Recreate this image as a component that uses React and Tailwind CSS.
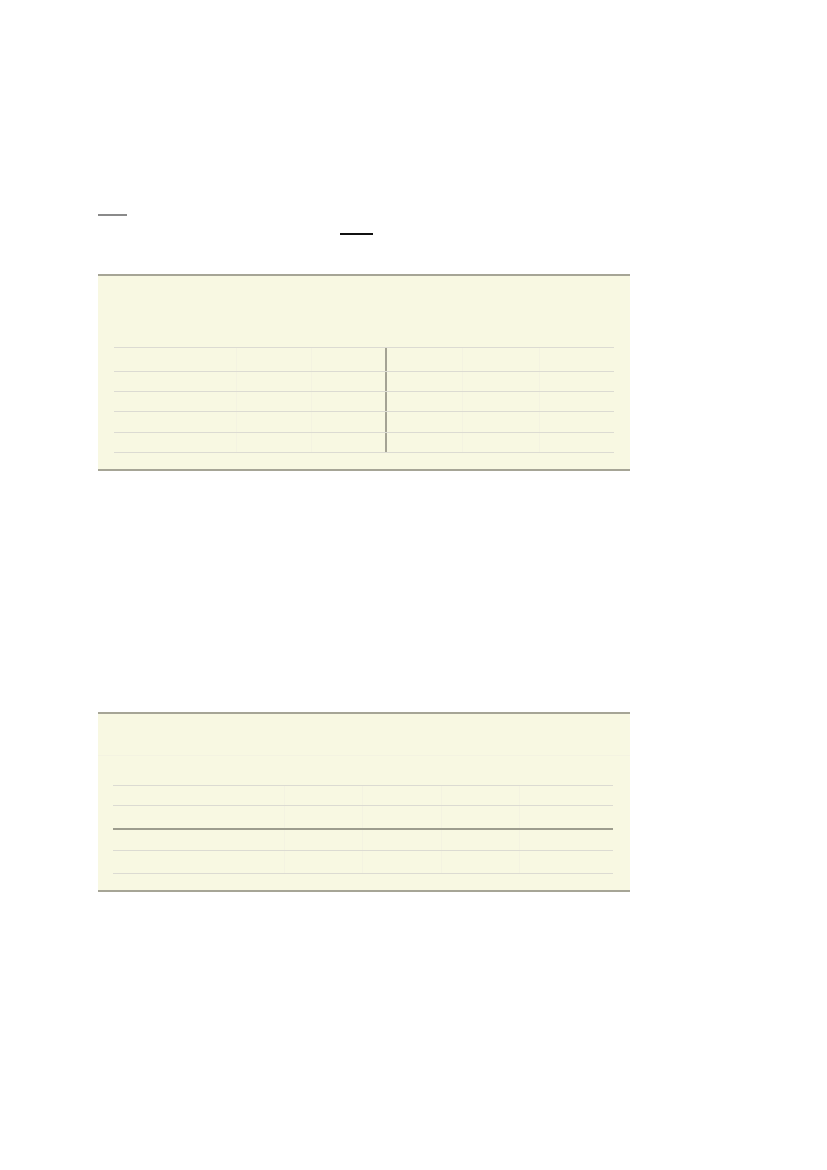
export default function App() {
  const rows1 = [24, 20, 20, 21, 20];
  const rows2 = [
    { h: 20, thick: false },
    { h: 25, thick: true },
    { h: 20, thick: false },
    { h: 23, thick: false },
  ];
  return (
    <div className="bg-white min-h-[1170px] w-[827px] pl-[98px] pt-[214px]" style={{ fontFamily: '"Liberation Sans", Arial, sans-serif' }}>
      <div className="w-[29px] h-[2px] bg-[#8a8a8a]" />
      <div className="ml-[242px] mt-[17px] w-[33px] h-[2px] bg-[#111]" />

      <div className="mt-[39px] w-[532px] border-y-2 border-[#a6a596] bg-[#f8f8e2] pt-[71px] pb-[16px] pl-[16px]">
        <div className="w-[500px] border-b border-[#dcdbd2]">
          {rows1.map((h, i) => (
            <div key={i} className="flex border-t border-[#dcdbd2]" style={{ height: h }}>
              <div className="w-[123px] border-r border-[#f4f3e1]" />
              <div className="w-[75px] border-r border-[#f4f3e1]" />
              <div className="w-[75px] border-r-2 border-[#a4a394]" />
              <div className="w-[76px] border-r border-[#f4f3e1]" />
              <div className="w-[77px] border-r border-[#f4f3e1]" />
              <div className="flex-1" />
            </div>
          ))}
        </div>
      </div>

      <div className="mt-[241px] w-[532px] border-y-2 border-[#a6a596] bg-[#f8f8e2]">
        <div className="h-[42px] border-b border-[#f4f3e1]" />
        <div className="pt-[29px] pb-[16px] pl-[15px]">
          <div className="w-[500px] border-b border-[#dcdbd2]">
            {rows2.map((r, i) => (
              <div
                key={i}
                className={
                  i === 2
                    ? "flex border-t-0"
                    : "flex border-t border-[#dcdbd2]"
                }
                style={{ height: r.h }}
              >
                <div className={r.thick ? "flex w-full border-b-2 border-[#9d9d8e]" : "flex w-full"}>
                  <div className="w-[172px] border-r border-[#f4f3e1]" />
                  <div className="w-[78px] border-r border-[#f4f3e1]" />
                  <div className="w-[79px] border-r border-[#f4f3e1]" />
                  <div className="w-[78px] border-r border-[#f4f3e1]" />
                  <div className="flex-1" />
                </div>
              </div>
            ))}
          </div>
        </div>
      </div>
    </div>
  );
}
